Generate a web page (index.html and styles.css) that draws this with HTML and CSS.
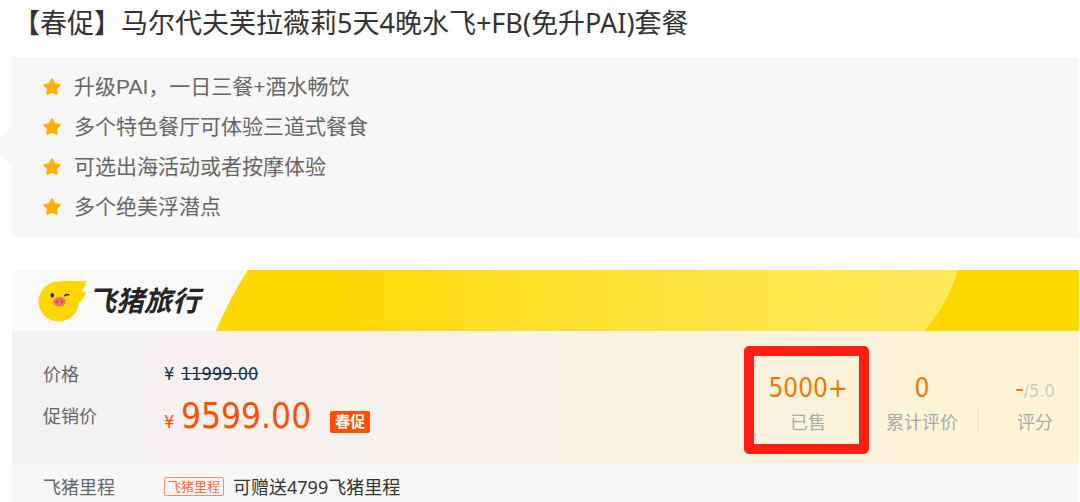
FILE: index.html
```html
<!DOCTYPE html>
<html lang="zh-CN">
<head>
<meta charset="utf-8">
<title>马尔代夫芙拉薇莉5天4晚</title>
<link rel="stylesheet" href="styles.css">
</head>
<body>
<svg class="defs" aria-hidden="true"><symbol id="star" viewBox="0 0 20 20"><path d="M10 2.8 12.2 7.2 17.2 8 13.7 11.6 14.5 16.6 10 14.4 5.5 16.6 6.3 11.6 2.8 8 7.8 7.2Z" fill="#ffb007" stroke="#ffb007" stroke-width="2.6" stroke-linejoin="round"/></symbol></svg>
<main class="product">
  <h1 class="title">【春促】马尔代夫芙拉薇莉5天4晚水飞+FB(免升PAI)套餐</h1>
  <ul class="features">
    <li><svg class="star"><use href="#star"/></svg>升级PAI，一日三餐+酒水畅饮</li>
    <li><svg class="star"><use href="#star"/></svg>多个特色餐厅可体验三道式餐食</li>
    <li><svg class="star"><use href="#star"/></svg>可选出海活动或者按摩体验</li>
    <li><svg class="star"><use href="#star"/></svg>多个绝美浮潜点</li>
  </ul>
  <section class="offer">
    <header class="brand">
      <svg class="brand-bg" viewBox="0 0 1067 61" preserveAspectRatio="none" aria-hidden="true">
        <defs><linearGradient id="glow" x1="0" x2="1"><stop offset=".15" stop-color="#ffd800"/><stop offset=".35" stop-color="#ffdd20"/><stop offset=".6" stop-color="#ffe33e"/><stop offset="1" stop-color="#ffea5c"/></linearGradient></defs>
        <path d="M236 0H1067V61H204Q218 28 236 0Z" fill="#ffd800"/>
        <path d="M236 0H946Q936 34 912 61H204Q218 28 236 0Z" fill="url(#glow)"/>
      </svg>
      <svg class="pig" viewBox="0 0 50 42" aria-hidden="true">
        <path d="M21 1.5C28 .6 40 1.5 48.5 1.2Q47.5 7 43.5 11.5L48 12Q46.5 19 41 22.5A20.3 20 0 1 1 21 1.5Z" fill="#ffd800"/>
        <ellipse cx="14.3" cy="15.3" rx="1.7" ry="2.4" fill="#252525"/>
        <path d="M26.5 16.2Q29 13.3 31 15.3" fill="none" stroke="#252525" stroke-width="1.5"/>
        <ellipse cx="21.5" cy="21.8" rx="6.2" ry="4.8" fill="#f0716f"/>
        <ellipse cx="19.3" cy="21.8" rx="1" ry="1.7" fill="#b94a4c"/><ellipse cx="23.8" cy="21.8" rx="1" ry="1.7" fill="#b94a4c"/>
      </svg>
      <span class="brand-name">飞猪旅行</span>
    </header>
    <div class="deal">
      <dl class="prices">
        <dt>价格</dt><dd class="old"><span class="yen">¥</span><del>11999.00</del></dd>
        <dt>促销价</dt><dd class="now"><span class="yen">¥</span><strong>9599.00</strong><span class="badge">春促</span></dd>
      </dl>
      <div class="stats">
        <div class="stat marked"><b>5000+</b><span>已售</span></div>
        <div class="stat"><b>0</b><span>累计评价</span></div>
        <div class="stat score"><b>-<small>/5.0</small></b><span>评分</span></div>
      </div>
    </div>
    <dl class="miles">
      <dt>飞猪里程</dt><dd><span class="tag">飞猪里程</span>可赠送4799飞猪里程</dd>
    </dl>
  </section>
</main>
</body>
</html>
```
FILE: styles.css
```css
* { box-sizing: border-box; }
body {
  margin: 0;
  background: #fff;
  color: #666;
  font-family: "Noto Sans", "Noto Sans CJK SC", sans-serif;
  overflow: hidden;
}
.defs { position: absolute; width: 0; height: 0; }
.product { padding: 0 1px 0 12px; }
.title {
  margin: 0 0 12px;
  padding-left: 1px;
  font-size: 27px;
  font-weight: 400;
  line-height: 45px;
  color: #333;
  white-space: nowrap;
}
.features {
  position: relative;
  margin: 0 0 33px;
  padding: 10px 30px;
  list-style: none;
  background: #f7f7f7;
  font-family: "Liberation Sans", "Noto Sans CJK SC", sans-serif;
  font-size: 21px;
  line-height: 40px;
}
.features::before {
  content: "";
  position: absolute;
  left: -20px;
  top: 70px;
  border: 20px solid transparent;
  border-left-width: 0;
  border-right-color: #f7f7f7;
}
.features li { display: flex; align-items: center; gap: 12px; }
.star { width: 20px; height: 20px; }

.brand {
  position: relative;
  display: flex;
  align-items: center;
  height: 61px;
  padding-left: 26px;
  background: #fafafa;
}
.brand-bg { position: absolute; left: 0; top: 0; width: 100%; height: 100%; }
.pig { position: relative; width: 50px; height: 42px; }
.brand-name {
  position: relative;
  padding-bottom: 3px;
  font-family: "Noto Sans CJK SC", sans-serif;
  font-size: 28px;
  font-weight: 700;
  font-style: italic;
  line-height: 40px;
  color: #252525;
}

.deal {
  display: flex;
  justify-content: space-between;
  height: 133px;
  padding-left: 31px;
  background: linear-gradient(90deg, #f2f2f2 4%, #f6f1f0 18%, #f6f2ec 35%, #f8f2e4 60%, #fbf3dc 78%, #fff4d5 92%);
}
dl, dd { margin: 0; }
.prices, .miles {
  display: grid;
  grid-template-columns: 121px auto;
  font-size: 18px;
}
.prices {
  grid-template-rows: 36px 48px;
  align-content: start;
  align-items: center;
  padding-top: 24px;
}
.prices dd { display: flex; align-items: baseline; font-family: "DejaVu Sans Condensed", "Noto Sans CJK SC", sans-serif; }
.yen { width: 17px; }
.old { color: #14304c; }
.now { color: #ff5000; }
.now strong { padding-top: 2px; font-size: 35px; font-weight: 400; line-height: 46px; }
.badge {
  align-self: center;
  margin: 14px 0 0 19px;
  padding: 0 5px;
  border-radius: 2px;
  background: #ff5000;
  color: #fff;
  font-size: 15px;
  font-weight: 700;
  line-height: 22px;
}
.stats {
  display: grid;
  grid-template-columns: 114px 114px 100px;
  padding-top: 37px;
}
.stat {
  position: relative;
  display: flex;
  flex-direction: column;
  align-items: center;
  height: 80px;
}
.stat b {
  height: 38px;
  font-family: "DejaVu Sans Condensed", sans-serif;
  font-size: 26px;
  font-weight: 400;
  line-height: 40px;
  color: #f07800;
}
.stat span { font-size: 18px; line-height: 32px; color: #aaa; }
.stat small { font-size: 18px; line-height: 1; color: #ccc; }
.score { padding-left: 12px; }
.score::before {
  content: "";
  position: absolute;
  left: -2px;
  top: 40px;
  width: 2px;
  height: 27px;
  background: #f3ead8;
}
.marked::after {
  content: "";
  position: absolute;
  inset: -22px -4px -6px -7px;
  border: 10px solid #ff1e12;
  border-radius: 5px;
}
.miles {
  align-items: center;
  height: 44px;
  padding-left: 31px;
  background: #f7f7f7;
}
.miles dd { display: flex; align-items: center; gap: 9px; color: #333; }
.tag {
  padding: 0 3px;
  border: 1px solid #ff8d66;
  border-radius: 2px;
  color: #ff6a35;
  font-size: 13px;
  line-height: 17px;
}
```
